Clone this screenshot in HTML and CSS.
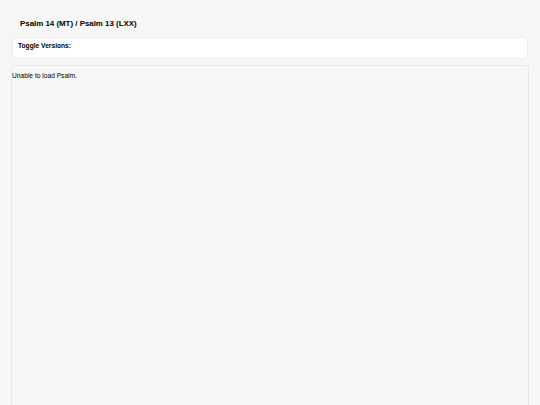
FILE: index.html
```html
<!DOCTYPE html>
<html>
  <head>
    <title>Psalm 14 (MT) / Psalm 13 (LXX)</title>
    <meta charset="utf-8" />
    <meta name="viewport" content="width=device-width" />
    <link rel="stylesheet" href="styles.css">
  </head>

  <body>
    <div id="title_box">
      <h3 id="psalm_title">Psalm 14 (MT) / Psalm 13 (LXX)</h3>
    </div>
    <div id="versions_box">
      <b>Toggle Versions:</b>
    </div>
    <div id="psalm_area">
      <div id="psalm_text">Unable to load Psalm.</div>
    </div>
  </body>
</html>
```

FILE: styles.css
```css
* {
  margin: 0;
  padding: 0;
}

body {
  background-color: #f6f6f6;
  color: black;
  font-family: "Liberation Sans", Arial, Helvetica, sans-serif;
  font-size: 6.65px;
  overflow: hidden;
}

#title_box {
  padding-top: 19px;
  padding-left: 20px;
  height: 18px;
}

#psalm_title {
  font-size: 7.9px;
  font-weight: bold;
  line-height: 10px;
}

#versions_box {
  background-color: white;
  box-sizing: border-box;
  height: 22px;
  margin-left: 12px;
  margin-right: 12px;
  padding-top: 4px;
  padding-left: 5px;
  border: 1px solid #ebebeb;
  border-radius: 3px;
  line-height: 8px;
}

#psalm_area {
  background-color: #f6f6f6;
  box-sizing: border-box;
  height: 400px;
  margin-top: 6px;
  margin-left: 11px;
  margin-right: 11px;
  border: 1px solid #e8e8e8;
  border-radius: 3px;
}

#psalm_text {
  padding-top: 6px;
  line-height: 8px;
}
```
